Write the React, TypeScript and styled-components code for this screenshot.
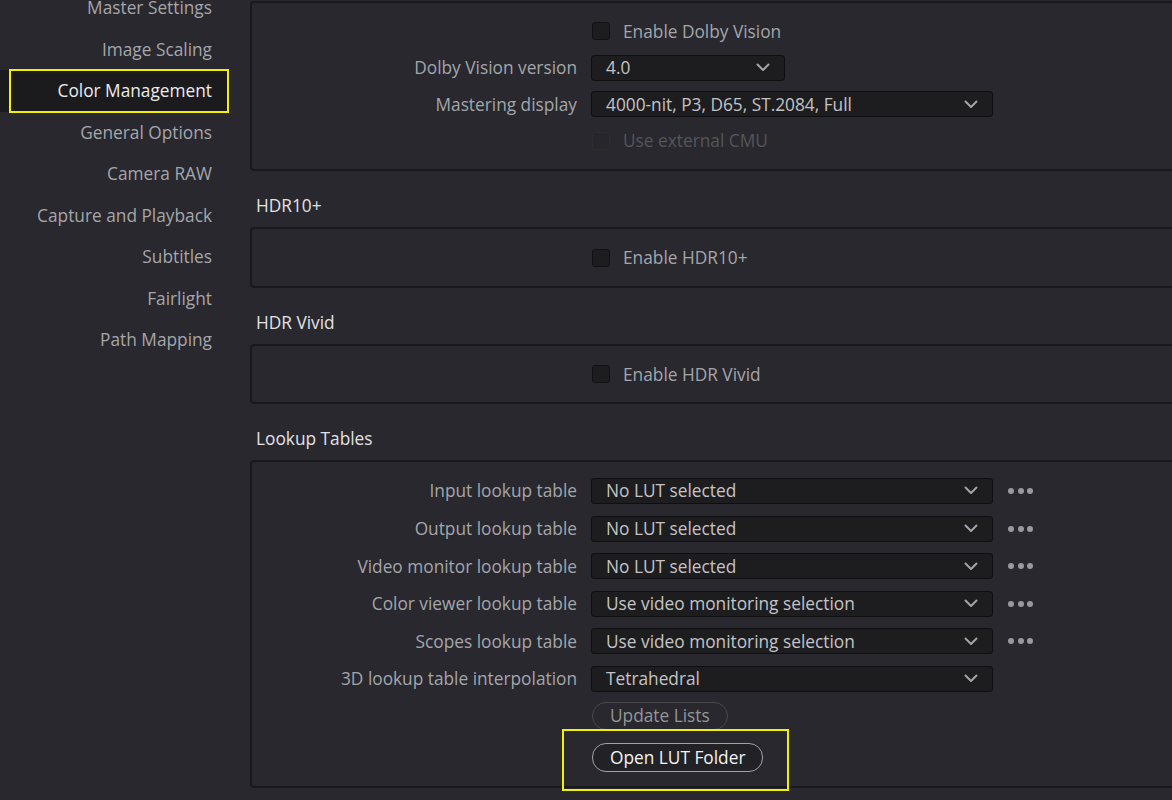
import React, { FC } from 'react'
import styled, { createGlobalStyle, css } from 'styled-components'

const GlobalStyle = createGlobalStyle`
  html, body {
    margin: 0;
    padding: 0;
    background: #28282e;
  }
  body {
    font-family: "Open Sans", "Noto Sans", sans-serif;
    font-size: 17.3px;
    overflow: hidden;
  }
`

const navItems = [
  'Master Settings',
  'Image Scaling',
  'Color Management',
  'General Options',
  'Camera RAW',
  'Capture and Playback',
  'Subtitles',
  'Fairlight',
  'Path Mapping',
]

type LutRow = { label: string; value: string; more?: boolean }

const lutRows: LutRow[] = [
  { label: 'Input lookup table', value: 'No LUT selected', more: true },
  { label: 'Output lookup table', value: 'No LUT selected', more: true },
  { label: 'Video monitor lookup table', value: 'No LUT selected', more: true },
  { label: 'Color viewer lookup table', value: 'Use video monitoring selection', more: true },
  { label: 'Scopes lookup table', value: 'Use video monitoring selection', more: true },
  { label: '3D lookup table interpolation', value: 'Tetrahedral' },
]

const Chevron: FC = () => (
  <svg width="14" height="9" viewBox="0 0 14 9">
    <path d="M1.5 1.5 L7 7 L12.5 1.5" fill="none" stroke="#a4a4a8" strokeWidth="2" strokeLinecap="round" strokeLinejoin="round" />
  </svg>
)

const Dropdown: FC<{ value: string; width?: number }> = ({ value, width }) => (
  <Select $width={width}>
    <span>{value}</span>
    <Chevron />
  </Select>
)

const CheckRow: FC<{ text: string; disabled?: boolean; compact?: boolean }> = ({ text, disabled, compact }) => (
  <Row $compact={compact}>
    <span />
    <CheckWrap $disabled={disabled}>
      <Box />
      <CheckText>{text}</CheckText>
    </CheckWrap>
  </Row>
)

const App: FC = () => {
  return (
    <>
      <GlobalStyle />
      <Page>
        <Sidebar>
          {navItems.map(item => (
            <NavItem key={item} $active={item === 'Color Management'}>
              {item}
            </NavItem>
          ))}
        </Sidebar>

        <Main>
          <Panel $first>
            <CheckRow text="Enable Dolby Vision" compact />
            <Row $compact>
              <Label>Dolby Vision version</Label>
              <Dropdown value="4.0" width={194} />
            </Row>
            <Row $compact>
              <Label>Mastering display</Label>
              <Dropdown value="4000-nit, P3, D65, ST.2084, Full" />
            </Row>
            <CheckRow text="Use external CMU" disabled compact />
          </Panel>

          <Heading>HDR10+</Heading>
          <Panel>
            <CheckRow text="Enable HDR10+" />
          </Panel>

          <Heading>HDR Vivid</Heading>
          <Panel>
            <CheckRow text="Enable HDR Vivid" />
          </Panel>

          <Heading>Lookup Tables</Heading>
          <Panel $tall>
            {lutRows.map(r => (
              <Row key={r.label}>
                <Label>{r.label}</Label>
                <Dropdown value={r.value} />
                {r.more && (
                  <More>
                    <i />
                    <i />
                    <i />
                  </More>
                )}
              </Row>
            ))}
            <ButtonRow>
              <span />
              <PillButton>Update Lists</PillButton>
            </ButtonRow>
            <ButtonRow $spaced>
              <span />
              <Highlight>
                <PillButton $primary>Open LUT Folder</PillButton>
              </Highlight>
            </ButtonRow>
          </Panel>
        </Main>
      </Page>
    </>
  )
}

const Page = styled.div`
  display: flex;
  width: 1200px;
  height: 800px;
  overflow: hidden;
  background: #28282e;
`

const Sidebar = styled.div`
  width: 230px;
  flex: none;
  margin-top: -13px;
  display: flex;
  flex-direction: column;
`

const NavItem = styled.div<{ $active?: boolean }>`
  position: relative;
  height: 41.5px;
  display: flex;
  align-items: center;
  justify-content: flex-end;
  padding-right: 18px;
  color: #a6a6aa;
  white-space: nowrap;
  ${p =>
    p.$active &&
    css`
      background: #1b1b1e;
      color: #ececec;
      &::after {
        content: '';
        position: absolute;
        left: 9px;
        right: 1px;
        top: -1px;
        bottom: -1px;
        border: 2px solid #f2f200;
      }
    `}
`

const Main = styled.div`
  flex: 1;
  padding-left: 20px;
  padding-top: 1px;
  display: flex;
  flex-direction: column;
`

const Panel = styled.div<{ $first?: boolean; $tall?: boolean }>`
  border: 2px solid #19191c;
  border-radius: 4px;
  padding: ${p => (p.$tall ? '10px 0 14px' : p.$first ? '10px 0 10px' : '10px 0 9px')};
`

const Heading = styled.div`
  padding: 24px 0 10px 6px;
  line-height: 22px;
  color: #e2e2e4;
`

const Row = styled.div<{ $compact?: boolean }>`
  display: grid;
  grid-template-columns: 325px auto auto 1fr;
  column-gap: 14px;
  align-items: center;
  height: ${p => (p.$compact ? 36.5 : 37.6)}px;
`

const Label = styled.div`
  text-align: right;
  color: #a4a6aa;
  white-space: nowrap;
`

const Select = styled.div<{ $width?: number }>`
  box-sizing: border-box;
  width: ${p => p.$width ?? 402}px;
  height: 26px;
  display: flex;
  align-items: center;
  justify-content: space-between;
  padding: 0 14px 0 14px;
  background: #1d1d20;
  border: 1px solid #0f0f11;
  border-radius: 3px;
  color: #c4c4c6;
  white-space: nowrap;
`

const More = styled.div`
  display: flex;
  gap: 3.5px;
  margin-left: 1px;
  i {
    width: 6px;
    height: 6px;
    border-radius: 50%;
    background: #9a9a9e;
  }
`

const Box = styled.div`
  box-sizing: border-box;
  width: 18px;
  height: 18px;
  background: #1d1d20;
  border: 1px solid #111113;
  border-radius: 3px;
`

const CheckWrap = styled.div<{ $disabled?: boolean }>`
  display: flex;
  align-items: center;
  gap: 13px;
  margin-left: 1px;
  color: ${p => (p.$disabled ? '#55555a' : '#a4a6aa')};
  ${p =>
    p.$disabled &&
    css`
      ${Box} {
        background: #26262b;
        border-color: #2c2c31;
      }
    `}
`

const CheckText = styled.span`
  white-space: nowrap;
`

const ButtonRow = styled.div<{ $spaced?: boolean }>`
  display: grid;
  grid-template-columns: 325px auto 1fr;
  column-gap: 15px;
  margin-top: ${p => (p.$spaced ? '13px' : '4px')};
`

const Highlight = styled.div`
  position: relative;
  display: flex;
  &::after {
    content: '';
    position: absolute;
    left: -30px;
    right: -26px;
    top: -14px;
    bottom: -19px;
    border: 2px solid #f2f200;
    pointer-events: none;
  }
`

const PillButton = styled.button<{ $primary?: boolean }>`
  font-family: inherit;
  font-size: 17.3px;
  height: 28px;
  padding: 0 17px;
  border-radius: 14px;
  background: transparent;
  border: 1px solid #48484d;
  color: #96969a;
  line-height: 1;
  ${p =>
    p.$primary &&
    css`
      border: 1.5px solid #a2a2a6;
      color: #f4f4f4;
      background: #222226;
      height: 29px;
    `}
`

export default App
